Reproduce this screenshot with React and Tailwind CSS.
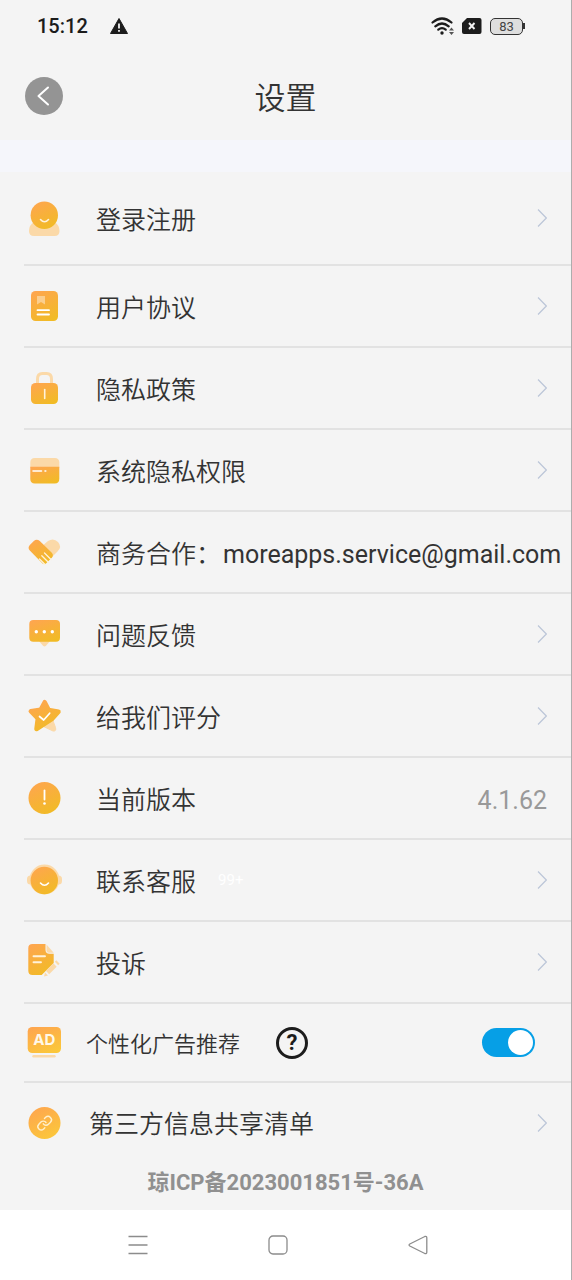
import { useState } from 'react'

const PALE = '#fbd9a8'

function Icon({ name, end = '#f1bb25', children }) {
  return (
    <svg viewBox="0 0 40 40" className="h-10 w-10 shrink-0" fill="none" aria-hidden="true">
      <defs>
        <linearGradient id={`fill-${name}`} x1="0.2" y1="0" x2="0.7" y2="1">
          <stop offset="0" stopColor="#fea64f" />
          <stop offset="1" stopColor={end} />
        </linearGradient>
      </defs>
      {children}
    </svg>
  )
}

const icons = {
  login: (
    <Icon name="login">
      <path d="M10 24h20.500q5 3 5 9 0 5-5 5h-20.500q-5 0-5-5 0-6 5-9z" fill={PALE} />
      <circle cx="20.300" cy="17.200" r="13.700" fill="url(#fill-login)" />
      <path d="M16.500 21.500q4 4.500 8 0" stroke="#fff2da" strokeWidth="1.600" strokeLinecap="round" />
    </Icon>
  ),
  agreement: (
    <Icon name="agreement">
      <rect x="7" y="5" width="27" height="30" rx="4.500" fill="url(#fill-agreement)" />
      <path d="M13 10h8v8.500l-4-2.500-4 2.500z" fill={PALE} opacity="0.750" />
      <path d="M13.500 24.200h11.500M13.500 28.500h11.500" stroke="#fff" strokeWidth="1.800" strokeLinecap="round" />
    </Icon>
  ),
  privacy: (
    <Icon name="privacy">
      <path d="M13.500 17v-6q0-5.500 5-5.500h4q5 0 5 5.500v6" stroke={PALE} strokeWidth="3" />
      <rect x="7" y="15" width="27" height="21" rx="4.500" fill="url(#fill-privacy)" />
      <path d="M20.700 21.500v9" stroke="#fff2da" strokeWidth="1.600" strokeLinecap="round" />
    </Icon>
  ),
  permission: (
    <Icon name="permission">
      <path d="M6.300 18v-5.500q0-4.500 4.500-4.500h20q4.500 0 4.500 4.500v5.500z" fill={PALE} />
      <path d="M6.300 16.700h29v12q0 4.700-4.500 4.700h-20q-4.500 0-4.500-4.700z" fill="url(#fill-permission)" />
      <path d="M9 21h8.500M21 21h0.800" stroke="#fff" strokeWidth="1.600" strokeLinecap="round" />
    </Icon>
  ),
  business: (
    <Icon name="business">
      <path d="M17 15l7-6q5.500-3.500 10 1 4.500 5-0.500 9.500l-8 8z" fill={PALE} />
      <path
        d="M5.800 18.500q-2.500-2.700 0-5.500l4-4q2.800-2.500 6 0l11.700 11.500q2.500 2.500 0.500 5l-6 6q-1.700 1.500-3.500 0z"
        fill="url(#fill-business)"
      />
      <path
        d="M15.500 27l5.500 5.500M17.800 23.800l6.500 6.500M20.500 21l6.500 6.500"
        stroke="#fff2da"
        strokeWidth="1.300"
        strokeLinecap="round"
      />
    </Icon>
  ),
  feedback: (
    <Icon name="feedback">
      <path d="M14.500 26.500h12l-4.500 5.300q-1.500 1.500-3 0z" fill={PALE} />
      <rect x="5.300" y="6" width="30.700" height="21.700" rx="4" fill="url(#fill-feedback)" />
      <circle cx="12.300" cy="17.700" r="1.700" fill="#fff" />
      <circle cx="20.300" cy="17.700" r="1.700" fill="#fff" />
      <circle cx="28.300" cy="17.700" r="1.700" fill="#fff" />
    </Icon>
  ),
  rate: (
    <Icon name="rate">
      <path d="M28 22l3.500 9.500q1 4-2.500 3.500l-9.500-4.500z" fill={PALE} stroke={PALE} strokeLinejoin="round" />
      <path
        d="M20.700 6.200l4 7.800 9.800 1.800-6.700 7.400-15.300 9.800 1.300-10.500-7-7.200 9.800-1.500z"
        fill="url(#fill-rate)"
        stroke="url(#fill-rate)"
        strokeWidth="4.500"
        strokeLinejoin="round"
      />
      <path d="M15.500 20.500l4.200 3.500 6-6.800" stroke="#fff" strokeWidth="1.700" strokeLinecap="round" strokeLinejoin="round" />
    </Icon>
  ),
  version: (
    <Icon name="version">
      <circle cx="20.500" cy="20" r="16" fill="url(#fill-version)" />
      <path d="M20.500 12.500v9" stroke="#fff" strokeWidth="1.800" strokeLinecap="round" />
      <circle cx="20.500" cy="25.500" r="1.300" fill="#fff" />
    </Icon>
  ),
  service: (
    <Icon name="service">
      <circle cx="20.500" cy="19.500" r="15" fill={PALE} />
      <rect x="3" y="15.500" width="35" height="9" rx="3.500" fill={PALE} />
      <circle cx="20.300" cy="20.500" r="13.700" fill="url(#fill-service)" />
      <path d="M16.500 23q4 4.500 8 0" stroke="#fff" strokeWidth="1.600" strokeLinecap="round" />
    </Icon>
  ),
  complaint: (
    <Icon name="complaint">
      <path
        d="M8.500 2h13v6q0 3.700 4 3.700h4.200v9.300l-12 12h-9.200q-4.200 0-4.200-4.200v-22.600q0-4.200 4.200-4.200z"
        fill="url(#fill-complaint)"
      />
      <path d="M22.500 2.500l7.200 8.200h-4.700q-2.500 0-2.500-2.500z" fill={PALE} />
      <path d="M9.500 14.300h11.500M9.500 20.300h7.500" stroke="#fff2da" strokeWidth="1.900" strokeLinecap="round" />
      <path d="M23.500 30.500l7.500-7.500" stroke={PALE} strokeWidth="4.600" />
      <path d="M32.500 21.500l1.500-1.500" stroke={PALE} strokeWidth="4.600" />
      <path d="M21 30.500l3 3-4 1z" fill={PALE} />
    </Icon>
  ),
  ad: (
    <Icon name="ad" end="#fbc73a">
      <rect x="3.700" y="4" width="33.300" height="26" rx="4.500" fill="url(#fill-ad)" />
      <text
        x="20.300"
        y="22"
        textAnchor="middle"
        fill="#fff8e8"
        fontFamily="Inter, sans-serif"
        fontSize="15"
        fontWeight="700"
      >
        AD
      </text>
      <path d="M9.500 33.300h21" stroke={PALE} strokeWidth="2.400" strokeLinecap="round" />
    </Icon>
  ),
  share: (
    <Icon name="share" end="#fbc73a">
      <circle cx="20.500" cy="20" r="16" fill="url(#fill-share)" />
      <g
        transform="translate(12.500 12) scale(0.680)"
        stroke="#fff0cc"
        strokeWidth="2.100"
        strokeLinecap="round"
        strokeLinejoin="round"
      >
        <path d="M10 13a5 5 0 0 0 7.540.540l3-3a5 5 0 0 0-7.070-7.070l-1.720 1.710" />
        <path d="M14 11a5 5 0 0 0-7.540-.540l-3 3a5 5 0 0 0 7.070 7.070l1.710-1.710" />
      </g>
    </Icon>
  ),
}

const items = [
  { id: 'agreement', label: '用户协议' },
  { id: 'privacy', label: '隐私政策' },
  { id: 'permission', label: '系统隐私权限' },
  { id: 'business', label: '商务合作：', email: 'moreapps.service@gmail.com' },
  { id: 'feedback', label: '问题反馈' },
  { id: 'rate', label: '给我们评分' },
  { id: 'version', label: '当前版本', value: '4.1.62' },
  { id: 'service', label: '联系客服', badge: '99+' },
  { id: 'complaint', label: '投诉' },
]

function Chevron() {
  return (
    <svg viewBox="0 0 10 20" className="ml-auto h-5 w-[10px] shrink-0" fill="none" aria-hidden="true">
      <path d="M1 1.500l8.300 8.500-8.300 8.500" stroke="#bcc6d8" strokeWidth="1.200" />
    </svg>
  )
}

function RowContent({ item }) {
  if (item.email) {
    return (
      <div className="flex h-20 items-center whitespace-nowrap">
        {icons[item.id]}
        <span className="ml-8 pt-1.5 font-[350]">{item.label}</span>
        <a href={`mailto:${item.email}`} className="ml-0.5 pt-1.5">{item.email}</a>
      </div>
    )
  }

  if (item.value) {
    return (
      <div className="flex h-20 items-center pr-6">
        {icons[item.id]}
        <span className="ml-8 pt-1.5 font-[350]">{item.label}</span>
        <span className="ml-auto pt-1.5 text-[#999999]">{item.value}</span>
      </div>
    )
  }

  return (
    <button type="button" className="flex h-20 w-full items-center pr-6 text-left">
      {icons[item.id]}
      <span className="ml-8 pt-1.5 font-[350]">{item.label}</span>
      {item.badge && <span className="ml-[22px] text-[15px] text-white">{item.badge}</span>}
      <Chevron />
    </button>
  )
}

function StatusBar() {
  return (
    <div className="flex h-[52px] items-center pr-[46px] pl-[37px] text-[#1c1c1c]">
      <span className="text-[20px] font-medium">15:12</span>
      <svg viewBox="0 0 18 16" className="ml-[22px] h-4 w-[18px]" aria-label="警告">
        <path d="M9 0.500l8.500 15h-17z" fill="currentColor" stroke="currentColor" strokeLinejoin="round" />
        <path d="M9 5.500v5M9 12v1.800" stroke="#f4f4f4" strokeWidth="1.800" />
      </svg>
      <div className="ml-auto flex items-center">
        <svg viewBox="0 0 24 18" className="h-[18px] w-6" fill="none" aria-label="Wi-Fi">
          <path
            d="M1.500 5.500q9.500-8 19 0M4.300 9.300q6.700-5.600 13.400 0M7.300 12.700q3.700-3 7.400 0"
            stroke="currentColor"
            strokeWidth="2.200"
            strokeLinecap="round"
          />
          <circle cx="11" cy="16" r="1.700" fill="currentColor" />
          <path d="M20.500 10.500l2.500 3h-5zM20.500 18l2.500-3h-5z" fill="#555" />
        </svg>
        <svg viewBox="0 0 20 16" className="ml-[7px] h-4 w-5" aria-label="无 SIM 卡">
          <path d="M5 0h12.500q2 0 2 2v12q0 2-2 2h-15.500q-2 0-2-2v-9z" fill="currentColor" />
          <path d="M7 5l5.500 6M12.500 5l-5.500 6" stroke="#f4f4f4" strokeWidth="1.900" />
        </svg>
        <div className="ml-2 flex h-[17px] w-[33px] items-center justify-center rounded-[5px] border border-[#333333] bg-[#dedede] text-[13px] leading-none text-[#444444]">
          83
        </div>
        <div className="h-1.5 w-0.5 bg-[#333333]" />
      </div>
    </div>
  )
}

export default function App() {
  const [personalAds, setPersonalAds] = useState(true)

  return (
    <div className="border-r border-[#adadad] font-['Roboto','Noto_Sans_CJK_SC',sans-serif] text-[25px] leading-8 text-[#333333]">
      <div className="bg-[#f4f4f4]">
        <StatusBar />

        <header className="grid h-[88px] grid-cols-[38px_1fr_38px] items-center px-[25px]">
          <button
            type="button"
            aria-label="返回"
            className="flex h-[38px] w-[38px] items-center justify-center rounded-full bg-[#949494]"
          >
            <svg viewBox="0 0 14 20" className="mr-0.5 h-5 w-[14px]" fill="none">
              <path d="M12 1.500l-9.500 8.500 9.500 8.500" stroke="#fff" strokeWidth="2" strokeLinecap="round" strokeLinejoin="round" />
            </svg>
          </button>
          <h1 className="pt-1.5 text-center text-[31px] leading-10 font-[350]">设置</h1>
        </header>

        <div className="h-8 bg-[#f5f6fb]" />

        <main>
          <ul className="pl-6">
            <li>
              <button type="button" className="flex h-[92px] w-full items-center pr-6 text-left">
                {icons.login}
                <span className="ml-8 pt-1.5 font-[350]">登录注册</span>
                <Chevron />
              </button>
            </li>
            {items.map((item) => (
              <li key={item.id} className="border-t-2 border-[#e2e2e2]">
                <RowContent item={item} />
              </li>
            ))}
            <li className="flex h-[79px] items-center border-t-2 border-[#e2e2e2] pr-9">
              {icons.ad}
              <label htmlFor="personal-ads" className="ml-[22px] pt-1 text-[22px] font-[350]">
                个性化广告推荐
              </label>
              <button
                type="button"
                aria-label="个性化广告推荐说明"
                className="ml-9 flex h-8 w-8 items-center justify-center rounded-full border-3 border-[#1c1c1c] text-[22px] font-bold text-[#1c1c1c]"
              >
                ?
              </button>
              <input
                id="personal-ads"
                type="checkbox"
                role="switch"
                checked={personalAds}
                onChange={(e) => setPersonalAds(e.target.checked)}
                className="ml-auto flex h-[29px] w-[53px] appearance-none items-center rounded-full bg-[#c4c4c4] px-0.5 before:h-[25px] before:w-[25px] before:rounded-full before:bg-white checked:justify-end checked:bg-[#069fe6]"
              />
            </li>
            <li className="border-t-2 border-[#e2e2e2]">
              <button type="button" className="flex h-20 w-full items-center pr-6 text-left">
                {icons.share}
                <span className="ml-[25px] pt-1 font-[350]">第三方信息共享清单</span>
                <Chevron />
              </button>
            </li>
          </ul>
        </main>

        <footer className="pt-1 pb-[11px] text-center text-[22px] font-bold text-[#909090]">
          琼ICP备2023001851号-36A
        </footer>
      </div>

      <nav className="flex h-[70px] items-center justify-between bg-white pr-[143px] pl-32">
        <button type="button" aria-label="最近任务">
          <svg viewBox="0 0 20 20" className="h-5 w-5" fill="none" stroke="#8c8c8c" strokeWidth="1.300">
            <path d="M0.500 1.500h19M0.500 10h19M0.500 18.500h19" />
          </svg>
        </button>
        <button type="button" aria-label="主屏幕">
          <svg viewBox="0 0 20 20" className="h-5 w-5" fill="none" stroke="#8c8c8c" strokeWidth="1.300">
            <rect x="1" y="1" width="18" height="18" rx="4" />
          </svg>
        </button>
        <button type="button" aria-label="返回上一页">
          <svg viewBox="0 0 20 20" className="h-5 w-5" fill="none" stroke="#8c8c8c" strokeWidth="1.300">
            <path d="M1.800 9l15-7.500q2-0.500 2 1.300v14.400q0 1.800-2 1.300l-15-7.500q-1.500-1 0-2z" />
          </svg>
        </button>
      </nav>
    </div>
  )
}
